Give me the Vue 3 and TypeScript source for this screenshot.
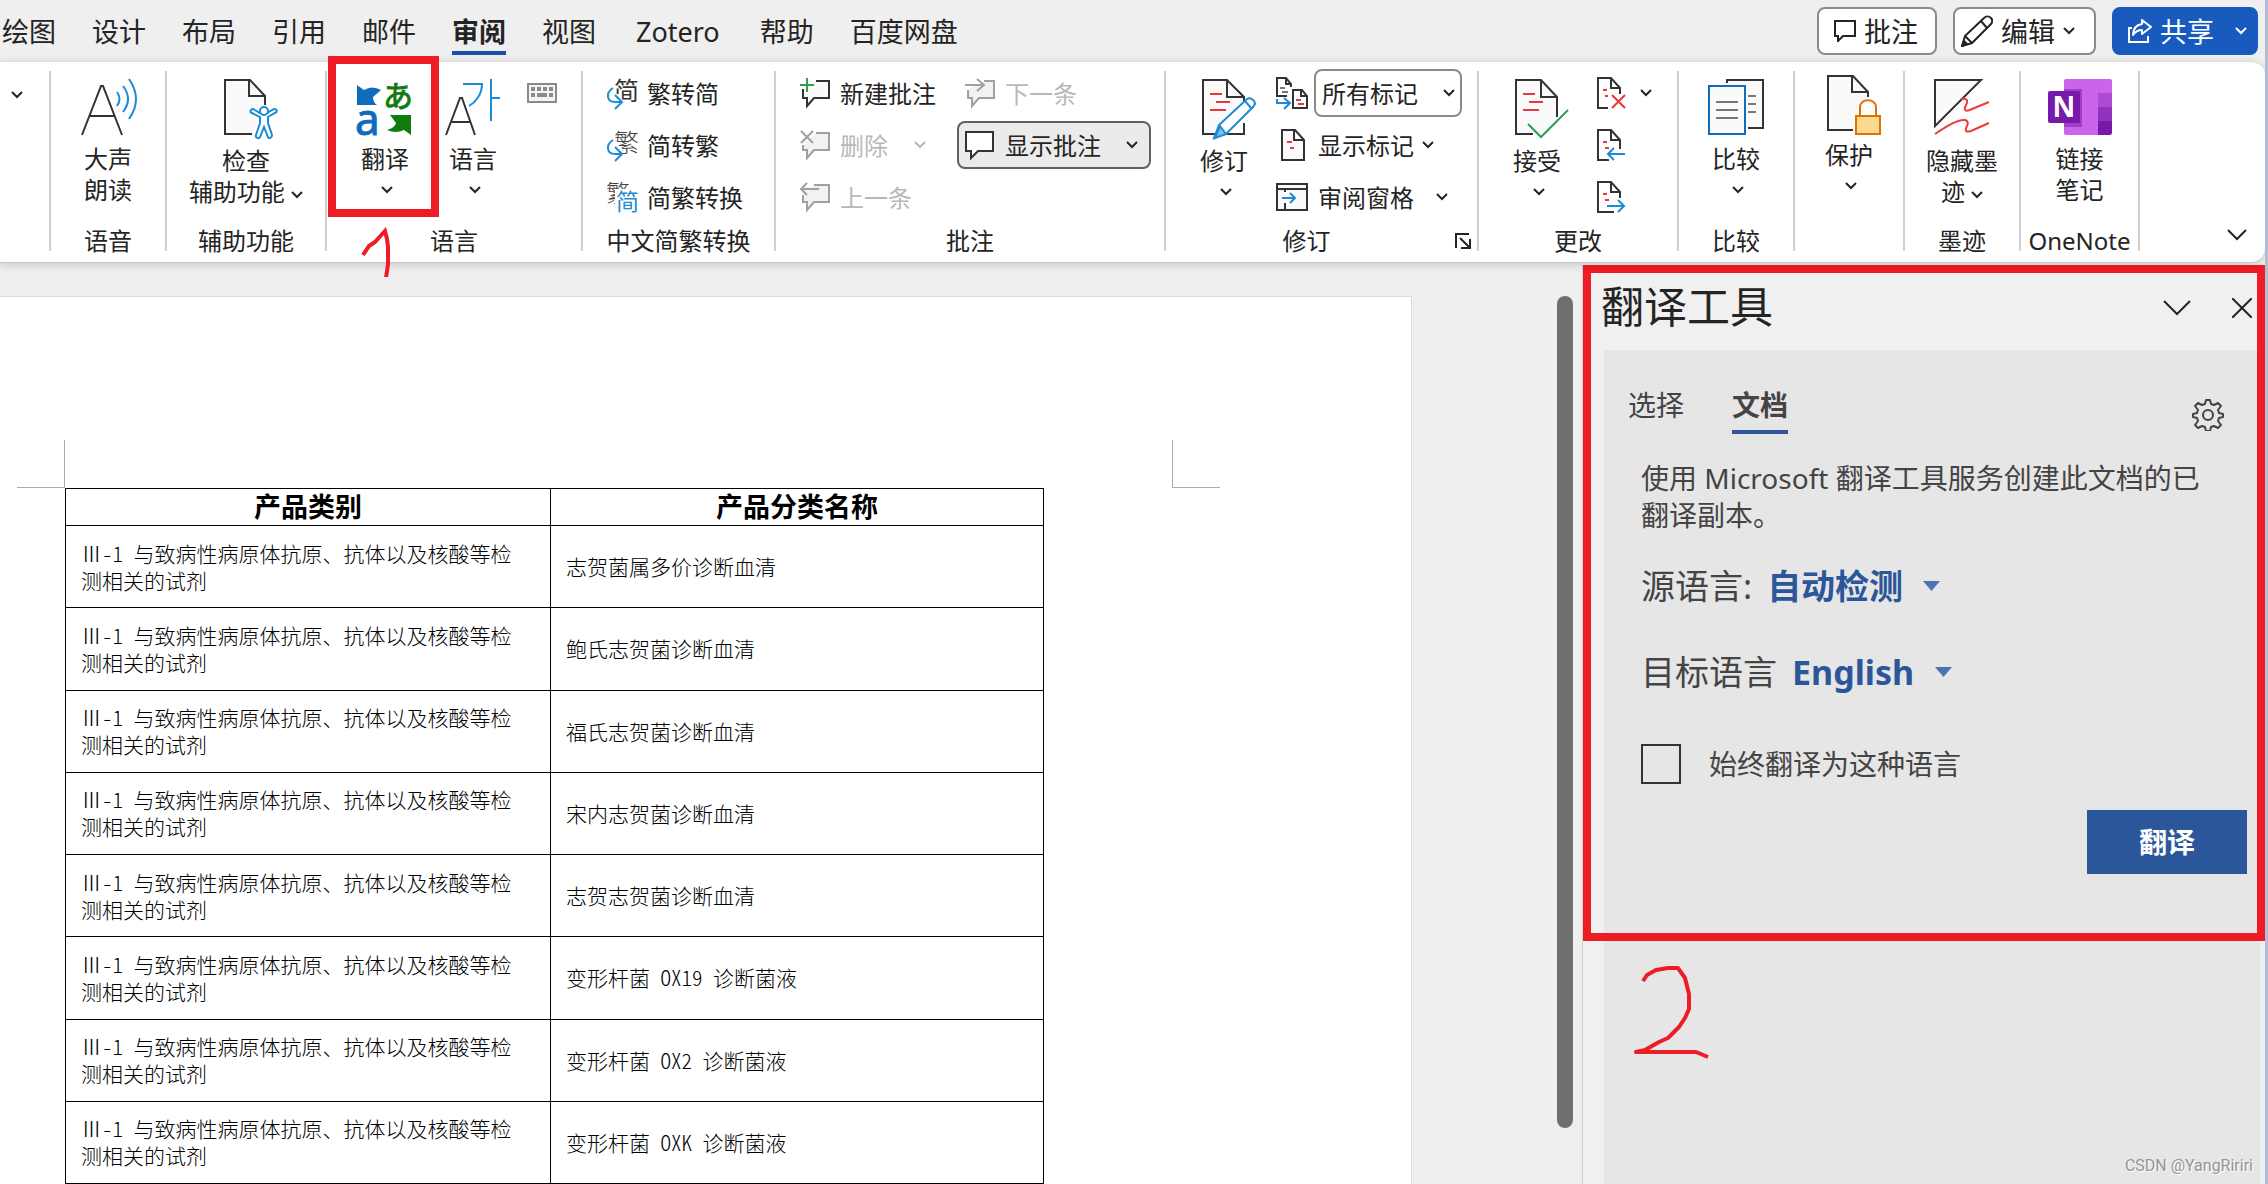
<script setup lang="ts">
import { h, ref } from 'vue'

const tabs = ['绘图', '设计', '布局', '引用', '邮件', '审阅', '视图', 'Zotero', '帮助', '百度网盘']
const activeTab = ref('审阅')

const category = 'Ⅲ-1 与致病性病原体抗原、抗体以及核酸等检测相关的试剂'
const products = [
  '志贺菌属多价诊断血清',
  '鲍氏志贺菌诊断血清',
  '福氏志贺菌诊断血清',
  '宋内志贺菌诊断血清',
  '志贺志贺菌诊断血清',
  '变形杆菌 OX19 诊断菌液',
  '变形杆菌 OX2 诊断菌液',
  '变形杆菌 OXK 诊断菌液',
]

const markup = ref('所有标记')
const source = ref('自动检测')
const target = ref('English')
const always = ref(false)

const Chevron = () =>
  h('svg', { width: 12, height: 8, viewBox: '0 0 12 8', fill: 'none', stroke: 'currentColor', 'stroke-width': 2, 'aria-hidden': 'true' }, [
    h('path', { d: 'M1 1l5 5 5-5' }),
  ])

const Caret = () =>
  h('svg', { width: 17, height: 10, viewBox: '0 0 17 10', 'aria-hidden': 'true' }, [
    h('path', { d: 'M0 0h17L8.500 10z', fill: '#4a74b4' }),
  ])
</script>

<template>
  <div class="window">
    <header class="tabbar">
      <nav class="tabs" role="tablist">
        <button
          v-for="t in tabs"
          :key="t"
          class="tab"
          :class="{ active: t === activeTab, latin: t === 'Zotero' }"
          role="tab"
          :aria-selected="t === activeTab"
          @click="activeTab = t"
        >{{ t }}</button>
      </nav>
      <div class="actions">
        <button class="action comments">
          <svg width="22" height="22" viewBox="0 0 22 22" fill="none" stroke="#242424" stroke-width="2"><path d="M1 1h20v15H9l-5 5v-5H1z" /></svg>
          批注
        </button>
        <button class="action edit">
          <svg width="32" height="32" viewBox="0 0 32 32" fill="none" stroke="#242424" stroke-width="2"><path d="M1 31l3-10L23 3c2-2 5-2 7 0s1 5 0 6L11 28z M4 21l7 7 M20 6l6 7" /><path d="M1 31l2-5 3 3z" fill="#242424" /></svg>
          编辑
          <Chevron />
        </button>
        <button class="action share">
          <svg width="24" height="24" viewBox="0 0 24 24" fill="none" stroke="#fff" stroke-width="2"><path d="M4 9H1v14h19v-6" /><path d="M14 1l9 7-9 7v-4c-5 0-7 2-9 5 0-6 3-10 9-11z" stroke-linejoin="round" /></svg>
          共享
          <Chevron class="far" />
        </button>
      </div>
    </header>

    <section class="ribbon">
      <div class="group g-more">
        <button class="more" aria-label="更多"><Chevron /></button>
      </div>

      <div class="group g-speech">
        <div class="body center">
          <button class="big">
            <svg class="ico" width="54" height="56" viewBox="0 0 54 56" fill="none" stroke-width="2">
              <path d="M1 56L20 7h2l19 49M9 37h25" stroke="#333" />
              <path d="M36 13q5 7 0 14M42 7q10 13 0 26M48 0q14 20 0 40" stroke="#1e8bd4" />
            </svg>
            <span>大声<br />朗读</span>
          </button>
        </div>
        <div class="caption">语音</div>
      </div>

      <div class="group g-access">
        <div class="body center">
          <button class="big">
            <svg class="ico tall" width="44" height="60" viewBox="0 0 44 60" fill="none" stroke-width="2">
              <path d="M28 55H1V1h25l15 16v9" fill="#fafafa" stroke="#333" />
              <path d="M25 1v16h16" stroke="#333" />
              <g fill="#fff" stroke="#1e8bd4">
                <path d="M28 34c-3-1-1-4 1-4l7 4h7l7-4c3 0 4 3 1 4l-7 4v6l4 12c0 3-3 4-4 2l-4-10-4 10c-1 2-5 1-4-2l4-12v-6z" />
                <circle cx="40" cy="32" r="4" />
              </g>
            </svg>
            <span>检查<br />辅助功能 <Chevron class="spaced" /></span>
          </button>
        </div>
        <div class="caption">辅助功能</div>
      </div>

      <div class="group g-lang">
        <div class="body langs">
          <button class="big w88 marked">
            <svg class="ico" width="56" height="56" viewBox="0 0 56 56">
              <path d="M0 6l7 5q8-5 17 0l-8 7q0 5 4 8H0z" fill="#0f6cbd" />
              <text x="26" y="28" font-family="Noto Sans CJK JP" font-size="30" font-weight="400" fill="#107c10" stroke="#107c10">あ</text>
              <text x="-2" y="56" font-family="Noto Sans" font-size="44" fill="#0f6cbd" stroke="#0f6cbd">a</text>
              <path d="M54 56l-7-5q-8 4-17 0 8-2 9-7l-6-8h21z" fill="#107c10" />
            </svg>
            <span>翻译</span>
            <Chevron class="below" />
          </button>
          <button class="big w88">
            <svg class="ico" width="56" height="56" viewBox="0 0 56 56" fill="none" stroke-width="2">
              <path d="M1 56L15 19h2l13 37M7 43h18" stroke="#333" />
              <path d="M18 5h19c0 10-6 18-13 22M46 0v42M46 19h9" stroke="#1e8bd4" />
            </svg>
            <span>语言</span>
            <Chevron class="below" />
          </button>
          <button class="kbd" aria-label="更新输入法词典">
            <svg width="30" height="20" viewBox="0 0 30 20"><rect x="1" y="1" width="28" height="18" fill="#f4f4f4" stroke="#8a8a8a" stroke-width="2" /><path d="M4 6h4m2 0h4m2 0h4m2 0h4M4 12h4m2 0h10m2 0h4" stroke="#8a8a8a" stroke-width="4" /></svg>
          </button>
        </div>
        <div class="caption">语言</div>
        <svg class="one" width="32" height="50" viewBox="0 0 32 50" fill="none" stroke="#ee1c24" stroke-width="4"><path d="M2 28l6-9 6-4 10-11 2 8 1 8v17l-2 14" /></svg>
      </div>

      <div class="group g-chinese">
        <div class="body">
          <div class="stack">
            <button class="small">
              <svg class="sico" width="32" height="32" viewBox="0 0 32 32" fill="none" stroke="#1e8bd4" stroke-width="2"><text x="7" y="23" font-family="Noto Sans CJK SC" font-size="25" fill="#333" stroke="none">简</text><path d="M0 9h9v8h5v14H0z" fill="#fff" stroke="none" /><path d="M6 11c-8 5-6 14 2 14h7M8 18l7 7-7 7" /></svg>
              繁转简
            </button>
            <button class="small">
              <svg class="sico" width="32" height="32" viewBox="0 0 32 32" fill="none" stroke="#1e8bd4" stroke-width="2"><text x="7" y="23" font-family="Noto Sans CJK TC" font-size="25" font-weight="300" fill="#444" stroke="none">繁</text><path d="M0 9h8v8h7v14H0z" fill="#fff" stroke="none" /><path d="M6 11c-8 5-6 14 2 14h7M8 18l7 7-7 7" /></svg>
              简转繁
            </button>
            <button class="small">
              <svg class="sico" width="32" height="32" viewBox="0 0 32 32"><text x="-1" y="21" font-family="Noto Sans CJK TC" font-size="24" font-weight="300" fill="#444">繁</text><path d="M8 8h24v24H8z" fill="#fff" /><text x="9" y="29" font-family="Noto Sans CJK SC" font-size="23" fill="#1e8bd4">简</text></svg>
              简繁转换
            </button>
          </div>
        </div>
        <div class="caption">中文简繁转换</div>
      </div>

      <div class="group g-comment">
        <div class="body">
          <div class="stack first">
            <button class="small">
              <svg class="sico" width="30" height="30" viewBox="0 0 30 30" fill="none" stroke="#333" stroke-width="2"><path d="M16 3h13v17H14l-7 8v-8H3v-9" fill="#fafafa" /><path d="M7 0v14M0 7h14" stroke="#2f9e4f" /></svg>
              新建批注
            </button>
            <button class="small off" disabled>
              <svg class="sico" width="30" height="30" viewBox="0 0 30 30" fill="none" stroke="#a0a0a0" stroke-width="2"><path d="M16 3h13v17H14l-7 8v-8H3v-5" fill="#f2f2f2" /><path d="M1 1l12 12M13 1L1 13" /></svg>
              删除
              <Chevron class="drop" />
            </button>
            <button class="small off" disabled>
              <svg class="sico" width="30" height="30" viewBox="0 0 30 30" fill="none" stroke="#a0a0a0" stroke-width="2"><path d="M14 3h15v17H14l-7 8v-8H3v-7" fill="#f2f2f2" /><path d="M2 8h18" stroke="#f2f2f2" stroke-width="6" /><path d="M1 7h18M7 1L1 7l6 6" /></svg>
              上一条
            </button>
          </div>
          <div class="stack">
            <button class="small off inset" disabled>
              <svg class="sico" width="30" height="30" viewBox="0 0 30 30" fill="none" stroke="#a0a0a0" stroke-width="2"><path d="M19 3h10v17H14l-7 8v-8H3v-8" fill="#f2f2f2" /><path d="M0 7h18M12 1l7 6-7 6" /></svg>
              下一条
            </button>
            <button class="small toggle" aria-pressed="true">
              <svg class="sico" width="30" height="30" viewBox="0 0 30 30" fill="#fff" stroke="#333" stroke-width="2"><path d="M1 2h27v19H13l-7 7v-7H1z" /></svg>
              显示批注
              <Chevron class="end" />
            </button>
          </div>
        </div>
        <div class="caption">批注</div>
      </div>

      <div class="group g-track">
        <div class="body">
          <button class="big tracking">
            <svg class="ico tall" width="44" height="60" viewBox="0 0 44 60" fill="none" stroke-width="2">
              <path d="M1 1h24l17 17v37H1z" fill="#fafafa" stroke="#333" /><path d="M25 1v17h17" stroke="#333" />
              <path d="M8 15h12M14 23h14M8 31h16" stroke="#e8383d" />
              <path d="M41 31l5-5v20l-9 12h-8z" fill="#fff" />
              <path d="M42 44v11H27" stroke="#333" />
              <path d="M12 59l5-13 28-26c3-2 8 1 8 5l-2 3-27 27z" fill="#fff" stroke="#1e8bd4" />
              <path d="M13 59l5-12 6 8z" fill="#83beec" stroke="#1e8bd4" /><path d="M43 22l7 8" stroke="#1e8bd4" />
            </svg>
            <span>修订</span>
            <Chevron class="below" />
          </button>
          <div class="stack">
            <div class="small">
              <svg class="sico" width="32" height="32" viewBox="0 0 32 32" fill="none" stroke="#333" stroke-width="2"><path d="M11 19H1V1h9l5 6v3M10 1v6h5" /><path d="M4 11h5M6 15h6" stroke="#777" /><path d="M17 13h9l5 6v12H17zM25 13v6h6" /><path d="M20 23h5M22 27h6" stroke="#e8383d" /><path d="M1 22v4h12M8 21l6 5-6 6" stroke="#1e8bd4" /></svg>
              <span class="markup">
                <select v-model="markup" aria-label="显示以供审阅"><option>所有标记</option></select>
                <Chevron />
              </span>
            </div>
            <button class="small">
              <svg class="sico" width="32" height="32" viewBox="0 0 32 32" fill="none" stroke="#333" stroke-width="2"><path d="M6 1h13l9 10v20H6zM18 1v10h10" fill="#fafafa" /><path d="M11 13h5M14 19h4" stroke="#e8383d" /></svg>
              <span class="lead">显示标记</span>
              <Chevron class="near" />
            </button>
            <button class="small">
              <svg class="sico" width="32" height="30" viewBox="0 0 32 30" fill="none" stroke="#333" stroke-width="2"><path d="M1 2h30v26H1zM1 7h30M9 7v21" fill="#fafafa" /><path d="M5 10h10v11H5z" fill="#fafafa" stroke="none" /><path d="M6 16h13M14 11l5 5-5 5" stroke="#1e8bd4" /></svg>
              <span class="lead">审阅窗格</span>
              <Chevron class="drop" />
            </button>
          </div>
        </div>
        <div class="caption launch">
          <span>修订</span>
          <button aria-label="修订选项"><svg width="16" height="16" viewBox="0 0 16 16" fill="none" stroke="#242424" stroke-width="2"><path d="M1 15V1h13M5 5l9 9M15 6v9H6" /></svg></button>
        </div>
      </div>

      <div class="group g-change">
        <div class="body">
          <button class="big accept">
            <svg class="ico tall" width="44" height="60" viewBox="0 0 44 60" fill="none" stroke-width="2">
              <path d="M18 55H1V1h25l16 17v22L26 56z" fill="#fafafa" /><path d="M18 55H1V1h25l16 17v20M26 1v17h16" stroke="#333" />
              <path d="M8 15h12M14 23h14M8 31h16" stroke="#e8383d" /><path d="M13 45l13 13 27-27" stroke="#2f9e4f" />
            </svg>
            <span>接受</span>
            <Chevron class="below" />
          </button>
          <div class="stack">
            <button class="small" aria-label="拒绝">
              <svg class="sico" width="28" height="32" viewBox="0 0 28 32" fill="none" stroke="#333" stroke-width="2"><path d="M11 31H1V1h13l9 10v6M14 1v10h9" /><path d="M6 13h4M8 19h3" stroke="#e8383d" /><path d="M15 18l13 13M28 18L15 31" stroke="#e8383d" /></svg>
              <Chevron class="drop-narrow" />
            </button>
            <button class="small" aria-label="上一处">
              <svg class="sico" width="28" height="32" viewBox="0 0 28 32" fill="none" stroke="#333" stroke-width="2"><path d="M12 31H1V1h13l9 10v9M14 1v10h9" /><path d="M6 13h4M8 19h4" stroke="#e8383d" /><path d="M11 25h17M17 19l-6 6 6 6" stroke="#1e8bd4" /></svg>
            </button>
            <button class="small" aria-label="下一处">
              <svg class="sico" width="28" height="32" viewBox="0 0 28 32" fill="none" stroke="#333" stroke-width="2"><path d="M17 31H1V1h13l9 10v6M14 1v10h9" /><path d="M6 13h4M8 19h4" stroke="#e8383d" /><path d="M10 25h17M21 19l6 6-6 6" stroke="#1e8bd4" /></svg>
            </button>
          </div>
        </div>
        <div class="caption">更改</div>
      </div>

      <div class="group g-compare">
        <div class="body center">
          <button class="big">
            <svg class="ico" width="56" height="56" viewBox="0 0 56 56" fill="#fafafa" stroke-width="2">
              <path d="M19 4V1h36v48H40" stroke="#333" /><path d="M40 17h8M40 25h8M40 33h8" stroke="#777" />
              <path d="M1 7h36v48H1z" stroke="#0f6cbd" /><path d="M8 23h22M8 31h22M8 39h22" stroke="#777" />
            </svg>
            <span>比较</span>
            <Chevron class="below" />
          </button>
        </div>
        <div class="caption">比较</div>
      </div>

      <div class="group g-protect">
        <div class="body center">
          <button class="big raised">
            <svg class="ico tall" width="44" height="60" viewBox="0 0 44 60" fill="none" stroke-width="2">
              <path d="M26 55H1V1h25l15 16v5" fill="#fafafa" stroke="#333" /><path d="M25 1v16h16" stroke="#333" />
              <path d="M33 41V32c0-9 16-9 16 0v9" fill="#fff" stroke="#e07000" /><path d="M29 41h24v18H29z" fill="#f9da8e" stroke="#e07000" />
            </svg>
            <span>保护</span>
            <Chevron class="below" />
          </button>
        </div>
        <div class="caption"></div>
      </div>

      <div class="group g-ink">
        <div class="body center">
          <button class="big">
            <svg class="ico tall" width="56" height="60" viewBox="0 0 56 60" fill="none" stroke-width="2">
              <path d="M1 1h46L1 47z" fill="#fafafa" stroke="#333" />
              <path d="M27 20c5-1 8 1 5 6-3 6 0 7 6 4l17-7M1 55c12-8 23-15 30-14 4 1 3 5 1 8-1 4 1 4 5 3l18-8" stroke="#ee3b3b" />
            </svg>
            <span>隐藏墨<br />迹 <Chevron class="spaced" /></span>
          </button>
        </div>
        <div class="caption">墨迹</div>
      </div>

      <div class="group g-onenote">
        <div class="body center">
          <button class="big">
            <svg class="ico" width="64" height="56" viewBox="0 0 64 56">
              <rect x="16" width="48" height="56" rx="2" fill="#ca64ea" /><path d="M50 14h14v14H50z" fill="#ae4bd5" /><path d="M50 28h14v14H50z" fill="#9332bf" /><path d="M50 42h14v12l-2 2H50z" fill="#7719aa" />
              <path d="M16 10h18v38H16z" fill="#a03fc4" /><rect y="12" width="32" height="32" rx="2" fill="#7719aa" />
              <text x="16" y="38" text-anchor="middle" font-family="Noto Sans" font-size="28" font-weight="700" fill="#fff">N</text>
            </svg>
            <span>链接<br />笔记</span>
          </button>
        </div>
        <div class="caption">OneNote</div>
      </div>

      <button class="collapse" aria-label="折叠功能区">
        <svg width="20" height="12" viewBox="0 0 20 12" fill="none" stroke="#242424" stroke-width="2"><path d="M1 1l9 9 9-9" /></svg>
      </button>
    </section>

    <main class="work">
      <div class="canvas">
        <article class="page">
          <div class="marks"><i class="mark left"></i><i class="mark right"></i></div>
          <table class="products">
            <colgroup><col class="c1" /><col /></colgroup>
            <thead>
              <tr><th scope="col">产品类别</th><th scope="col">产品分类名称</th></tr>
            </thead>
            <tbody>
              <tr v-for="p in products" :key="p">
                <td>{{ category }}</td>
                <td>{{ p }}</td>
              </tr>
            </tbody>
          </table>
        </article>
      </div>
      <div class="scroll"><div class="thumb"></div></div>

      <aside class="pane">
        <div class="pane-head">
          <h2>翻译工具</h2>
          <button aria-label="任务窗格选项"><svg width="28" height="16" viewBox="0 0 28 16" fill="none" stroke="#242424" stroke-width="2"><path d="M1 1l13 13L27 1" /></svg></button>
          <button aria-label="关闭"><svg width="20" height="20" viewBox="0 0 20 20" fill="none" stroke="#242424" stroke-width="2"><path d="M0 0l20 20M20 0L0 20" /></svg></button>
        </div>
        <div class="pane-body">
          <div class="pane-tabs">
            <button>选择</button>
            <button class="on">文档</button>
            <button class="gear" aria-label="设置">
              <svg width="32" height="32" viewBox="0 0 32 32" fill="none" stroke="#444" stroke-width="2" stroke-linejoin="round"><path d="M13 5l1-4h4l1 4 3 1 4-2 3 3-3 4 1 3 4 1v3l-4 1-1 3 3 4-3 3-4-2-3 1-1 4h-4l-1-4-3-1-4 2-3-3 3-4-1-3-4-1v-3l4-1 1-3-3-4 3-3 4 2z" /><circle cx="16" cy="16" r="5" /></svg>
            </button>
          </div>
          <p>使用 Microsoft 翻译工具服务创建此文档的已翻译副本。</p>
          <div class="field">
            <label for="src">源语言:</label>
            <select id="src" v-model="source"><option>自动检测</option></select>
            <Caret />
          </div>
          <div class="field second">
            <label for="dst">目标语言</label>
            <select id="dst" v-model="target"><option>English</option></select>
            <Caret />
          </div>
          <div class="always">
            <input id="always" v-model="always" type="checkbox" />
            <label for="always">始终翻译为这种语言</label>
          </div>
          <button class="go">翻译</button>
        </div>
        <div class="frame"></div>
        <svg class="two" width="80" height="96" viewBox="0 0 80 96" fill="none" stroke="#ee1c24" stroke-width="4"><path d="M10 17l4-6 9-5 12-2h10l7 10 4 16v15l-4 9-6 9-11 11-9 4-14 8-9 2h60l12 5" stroke-linejoin="round" /></svg>
        <div class="credit">CSDN @YangRiriri</div>
      </aside>
    </main>
  </div>
</template>

<style>
body {
  margin: 0;
}
</style>

<style scoped>
.window {
  box-sizing: border-box;
  height: 100vh;
  overflow: hidden;
  display: flex;
  flex-direction: column;
  border-right: 3px solid #b1bdd4;
  background: #efefef;
  color: #242424;
  font: 24px/31px 'Noto Sans', 'Noto Sans CJK SC', sans-serif;
}
button,
select {
  margin: 0;
  padding: 0;
  border: 0;
  background: none;
  color: inherit;
  font: inherit;
}
select {
  appearance: none;
}
svg {
  flex: none;
}

/* tab bar */
.tabbar {
  display: flex;
  justify-content: space-between;
  height: 61px;
  flex: none;
}
.tabs {
  display: flex;
  gap: 36px;
  padding-left: 2px;
  font-size: 27px;
}
.tab {
  height: 55px;
  box-sizing: border-box;
  padding-top: 12px;
  border-bottom: 4px solid transparent;
  white-space: nowrap;
}
.tab.latin {
  padding-left: 4px;
  padding-right: 4px;
}
.tab.active {
  font-weight: 700;
  border-image: linear-gradient(#1b4fae, #1b4fae) 1;
}
.actions {
  display: flex;
  gap: 16px;
  padding: 7px 7px 0 0;
  font-size: 27px;
}
.action {
  box-sizing: border-box;
  height: 48px;
  display: flex;
  align-items: center;
  border: 2px solid #8a8a8a;
  border-radius: 8px;
  background: #fff;
  gap: 8px;
  white-space: nowrap;
}
.comments {
  padding: 0 17px 0 15px;
}
.edit {
  padding: 0 19px 0 6px;
}
.share {
  padding: 0 9px 0 14px;
  border-color: #185abd;
  background: #185abd;
  color: #fff;
}
.far {
  margin-left: 13px;
}

/* ribbon */
.ribbon {
  position: relative;
  z-index: 1;
  box-sizing: border-box;
  flex: none;
  display: flex;
  height: 202px;
  padding-top: 9px;
  border-top: 1px solid #dedede;
  border-bottom: 1px solid #c8c8c8;
  border-radius: 0 14px 14px 0;
  background: #fff;
  box-shadow: 0 2px 8px rgba(0, 0, 0, 0.16);
}
.group {
  position: relative;
  box-sizing: border-box;
  flex: none;
  display: flex;
  flex-direction: column;
  height: 180px;
  border-right: 2px solid #d0d0d0;
}
.body {
  height: 154px;
  flex: none;
  display: flex;
}
.center {
  justify-content: center;
}
.caption {
  height: 31px;
  text-align: center;
  white-space: nowrap;
}
.g-more { width: 51px; }
.g-speech { width: 116px; }
.g-access { width: 160px; }
.g-lang { width: 256px; }
.g-chinese { width: 193px; }
.g-comment { width: 390px; }
.g-track { width: 313px; }
.g-change { width: 200px; }
.g-compare { width: 116px; }
.g-protect { width: 110px; }
.g-ink { width: 116px; }
.g-onenote { width: 119px; }

.more {
  padding: 20px 0 0 11px;
  line-height: 8px;
  text-align: left;
}
.more svg {
  display: block;
}
.big {
  display: flex;
  flex-direction: column;
  align-items: center;
  padding-top: 8px;
  white-space: nowrap;
}
.big.raised {
  padding-top: 4px;
}
.ico {
  margin-bottom: 8px;
  overflow: visible;
}
.ico.tall {
  margin-bottom: 6px;
}
.raised .ico.tall {
  margin-bottom: 4px;
}
.spaced {
  vertical-align: middle;
}
.below {
  margin-top: 12px;
  margin-left: 3px;
}
.langs {
  padding-left: 14px;
}
.w88 {
  width: 88px;
}
.marked {
  position: relative;
}
.marked::after {
  content: '';
  position: absolute;
  inset: -15px -10px 8px -13px;
  border: 8px solid #ee1c24;
}
.kbd {
  align-self: flex-start;
  padding: 12px 0 0 10px;
}
.kbd svg {
  display: block;
}
.one {
  position: absolute;
  left: 34px;
  bottom: -26px;
}
.stack {
  display: flex;
  flex-direction: column;
  margin-top: -4px;
}
.small {
  flex: none;
  height: 52px;
  display: flex;
  align-items: center;
  gap: 8px;
  white-space: nowrap;
  text-align: left;
}
.g-chinese .stack {
  padding-left: 24px;
}
.g-comment .small {
  gap: 10px;
}
.sico {
  overflow: visible;
}
.first {
  width: 157px;
  padding-left: 24px;
}
.off {
  color: #b8b8b8;
}
.drop {
  margin-left: 16px;
}
.drop-narrow {
  margin-left: 7px;
}
.inset {
  padding-left: 8px;
}
.small.toggle {
  box-sizing: border-box;
  width: 194px;
  height: 48px;
  margin: 2px 0;
  padding-left: 6px;
  border: 2px solid #616161;
  border-radius: 8px;
  background: #ebebeb;
}
.end {
  margin-left: 15px;
}
.tracking {
  padding-left: 34px;
  padding-right: 28px;
}
.g-track .small {
  gap: 6px;
}
.markup {
  display: grid;
  align-items: center;
}
.markup > * {
  grid-area: 1 / 1;
}
.markup select {
  width: 148px;
  height: 48px;
  padding-left: 6px;
  border: 2px solid #8a8a8a;
  border-radius: 8px;
  background: #fff;
}
.markup svg {
  justify-self: end;
  margin-right: 7px;
  pointer-events: none;
}
.lead {
  padding-left: 4px;
}
.launch {
  display: flex;
  align-items: center;
}
.launch span {
  flex: 1;
}
.launch button {
  margin: 0 6px 0 8px;
  line-height: 0;
}
.accept {
  padding-left: 34px;
  padding-right: 36px;
}
.near {
  margin-left: 2px;
}
.collapse {
  margin: 0 18px 21px auto;
  align-self: flex-end;
  line-height: 0;
}

/* document */
.work {
  flex: 1;
  min-height: 0;
  display: flex;
}
.canvas {
  flex: 1;
  min-width: 0;
  padding: 34px 146px 0 0;
  overflow: hidden;
}
.page {
  box-sizing: border-box;
  min-height: 100%;
  padding-top: 143px;
  background: #fff;
  box-shadow: 0 0 0 1px #dcdcdc;
}
.marks {
  display: flex;
  justify-content: space-between;
  margin: 0 191px 0 17px;
}
.mark {
  box-sizing: border-box;
  width: 48px;
  height: 48px;
  border: 0 solid #ababab;
  border-bottom-width: 1px;
}
.mark.left {
  border-right-width: 1px;
}
.mark.right {
  border-left-width: 1px;
}
.products {
  width: calc(100% - 432px);
  height: 696px;
  margin-left: 65px;
  table-layout: fixed;
  border-collapse: collapse;
  color: #000;
  font-family: 'Noto Sans CJK SC', serif;
  font-size: 21px;
  font-weight: 300;
  line-height: 27px;
}
.c1 {
  width: 485px;
}
th,
td {
  border: 1px solid #000;
}
th {
  height: 34px;
  padding: 0 0 2px;
  font-size: 27px;
  font-weight: 700;
  line-height: 32px;
}
td {
  padding: 0 24px 0 15px;
  text-align: left;
  font-feature-settings: 'hwid' 1;
}
.scroll {
  width: 25px;
  padding-top: 33px;
}
.thumb {
  width: 16px;
  height: 832px;
  border-radius: 8px;
  background: #6f6f6f;
}

/* translator pane */
.pane {
  position: relative;
  box-sizing: border-box;
  width: 683px;
  flex: none;
  display: flex;
  flex-direction: column;
  margin-top: 2px;
  border-left: 1px solid #cfcfcf;
  background: #f0f0f0;
}
.pane-head {
  display: flex;
  align-items: center;
  height: 85px;
  padding: 0 13px 0 18px;
  flex: none;
}
.pane-head h2 {
  flex: 1;
  margin: 0;
  padding-bottom: 2px;
  font-size: 43px;
  font-weight: 400;
  line-height: 60px;
}
.pane-head button {
  margin-left: 41px;
  line-height: 0;
}
.pane-body {
  flex: 1;
  margin: 0 5px 0 21px;
  padding: 35px 13px 0 37px;
  background: #e6e6e6;
  color: #444;
  font-size: 28px;
}
.pane-tabs {
  display: flex;
  align-items: flex-start;
  gap: 48px;
  margin: 0 23px 0 -13px;
}
.pane-tabs button {
  padding-bottom: 5px;
  border-bottom: 4px solid transparent;
  line-height: 40px;
}
.pane-tabs .on {
  border-color: #2b579a;
  font-weight: 700;
}
.pane-tabs .gear {
  margin-left: auto;
  padding: 14px 0 0;
  border: 0;
  line-height: 0;
}
.pane-body p {
  margin: 26px 20px 28px 0;
  line-height: 37px;
}
.field {
  display: flex;
  align-items: center;
  height: 48px;
  font-size: 34px;
  line-height: 48px;
}
.field.second {
  margin-top: 38px;
}
.field select {
  margin: 0 20px 0 15px;
  color: #2b579a;
  font-weight: 700;
}
.always {
  display: flex;
  align-items: center;
  gap: 28px;
  margin-top: 48px;
}
.always input {
  appearance: none;
  box-sizing: border-box;
  width: 40px;
  height: 40px;
  margin: 0;
  border: 2px solid #333;
}
.go {
  display: block;
  width: 160px;
  height: 64px;
  margin: 26px 0 0 auto;
  background: #2b579a;
  color: #fff;
  font-weight: 700;
}
.frame {
  position: absolute;
  inset: 0 0 auto;
  height: 660px;
  border: 8px solid #ee1c24;
  pointer-events: none;
}
.two {
  position: absolute;
  left: 50px;
  top: 699px;
}
.credit {
  position: absolute;
  right: 12px;
  bottom: 6px;
  color: #949494;
  font: 16px/24px Roboto, sans-serif;
  text-shadow: 1px 1px 0 #fff;
}
</style>
